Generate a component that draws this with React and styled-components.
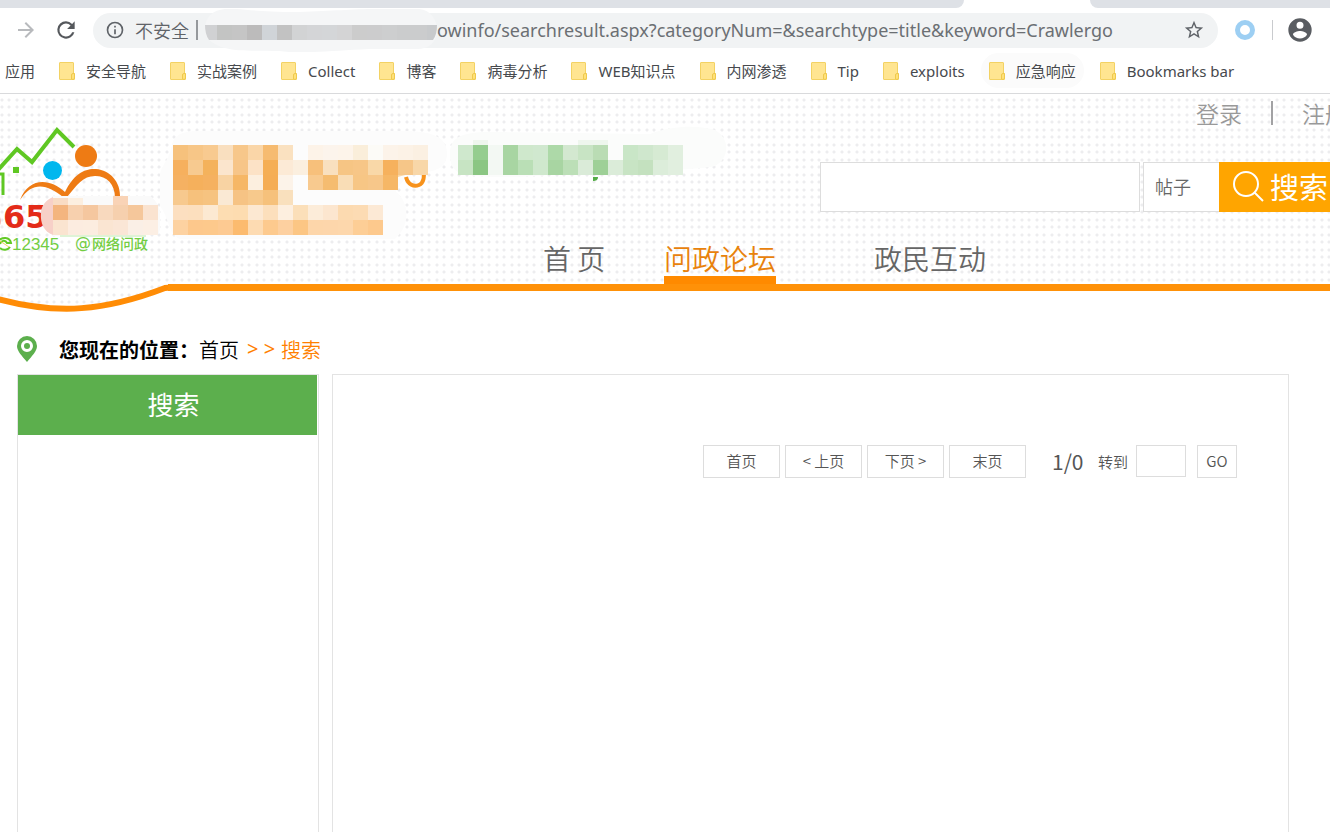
import React from "react";
import styled, { createGlobalStyle, css } from "styled-components";

const GlobalStyle = createGlobalStyle`
  *, *::before, *::after { box-sizing: border-box; }
  body {
    margin: 0;
    background: #fff;
    color: #666;
    font-family: "Noto Sans", "Noto Sans CJK SC", sans-serif;
    font-size: 15px;
  }
  button, input, select { font: inherit; color: inherit; }
  a { color: inherit; text-decoration: none; }
`;

const cjk = css`
  font-family: "Noto Sans CJK SC", sans-serif;
  font-weight: 350;
`;

const Page = styled.div`
  display: flex;
  flex-direction: column;
  min-height: 100vh;
  overflow: hidden;
`;

/* ---------- browser chrome ---------- */

const TabStrip = styled.div`
  display: flex;
  height: 8px;
`;
const TabGroup = styled.div`
  background: #dee1e6;
  flex: ${(p) => p.$grow};
  border-radius: ${(p) => (p.$side === "left" ? "0 0 8px 0" : "0 0 0 8px")};
`;
const ActiveTab = styled.div`
  width: 126px;
`;

const Toolbar = styled.div`
  display: flex;
  align-items: center;
  height: 44px;
  padding: 0 16px 0 14px;
`;
const IconButton = styled.button`
  display: flex;
  align-items: center;
  justify-content: center;
  flex: none;
  width: ${(p) => p.$w}px;
  height: 28px;
  padding: 0;
  border: 0;
  background: none;
`;
const Omnibox = styled.div`
  display: flex;
  align-items: center;
  flex: 1;
  height: 35px;
  margin-right: 12px;
  padding: 0 12px;
  border-radius: 18px;
  background: #f1f3f4;
  color: #5f6368;
`;
const Insecure = styled.span`
  ${cjk}
  font-size: 18px;
  line-height: 24px;
  margin-left: 10px;
  padding-right: 7px;
`;
const OmniDivider = styled.span`
  width: 2px;
  height: 20px;
  background: #96999c;
  margin-right: 7px;
`;
const UrlInput = styled.input`
  flex: 1;
  min-width: 0;
  padding: 0;
  border: 0;
  outline: 0;
  background: none;
  color: #6b6f73;
  font-family: "Noto Sans", sans-serif;
  font-size: 18px;
  line-height: 24px;
`;
const BarDivider = styled.span`
  width: 1px;
  height: 20px;
  background: #c9cbce;
  margin: 0 13px 0 12px;
`;

const Bookmarks = styled.nav`
  display: flex;
  align-items: center;
  height: 42px;
  padding: 0 0 4px 5px;
  border-bottom: 1px solid #d9dadc;
  white-space: nowrap;
`;
const Bookmark = styled.a`
  display: flex;
  align-items: center;
  gap: 11px;
  height: 35px;
  padding: 0 8px;
  margin-right: 8px;
  border-radius: 18px;
  background: ${(p) => (p.$hot ? "#fbfbfb" : "none")};
  color: #46494d;
  font-family: "Noto Sans", "Noto Sans CJK SC", sans-serif;
  font-size: 15px;
`;
const Apps = styled(Bookmark)`
  padding-left: 0;
`;

/* ---------- site header ---------- */

const Header = styled.header`
  background-color: #fff;
  background-image:
    radial-gradient(circle at 9px 6px, #ededef 1px, transparent 2px),
    radial-gradient(circle at 2px 6px, #ededef 1px, transparent 2px),
    radial-gradient(circle at 9px 13px, #ededef 1px, transparent 2px),
    radial-gradient(circle at 2px 13px, #ededef 1px, transparent 2px);
  background-size: 15px 15px;
`;
const HeaderBody = styled.div`
  display: flex;
  height: 190px;
`;
const LogoArt = styled.svg`
  flex: none;
  display: block;
`;
const HeaderMain = styled.div`
  flex: 1;
  min-width: 0;
  display: flex;
  flex-direction: column;
  justify-content: space-between;
`;
const HeaderTop = styled.div`
  display: flex;
  justify-content: space-between;
`;
const Tools = styled.div`
  display: flex;
  flex-direction: column;
  align-items: flex-end;
  gap: 30px;
  margin-right: -30px;
`;
const Account = styled.div`
  ${cjk}
  display: flex;
  align-items: center;
  gap: 29px;
  height: 38px;
  padding-right: 12px;
  font-size: 23px;
  color: #999;
`;
const AccountBar = styled.span`
  width: 2px;
  height: 24px;
  background: #a2a2a4;
`;
const SearchForm = styled.form`
  display: flex;
  height: 50px;
`;
const SearchInput = styled.input`
  width: 320px;
  margin-right: 3px;
  padding: 0 10px;
  border: 1px solid #ddd;
  background: #fff;
`;
const SearchKind = styled.select`
  ${cjk}
  appearance: none;
  width: 76px;
  padding: 0 11px 2px;
  border: 1px solid #ddd;
  border-right: 0;
  border-radius: 0;
  background: #fff;
  font-size: 18px;
`;
const SearchButton = styled.button`
  display: flex;
  align-items: center;
  gap: 4px;
  width: 141px;
  padding: 0 0 2px 13px;
  border: 0;
  background: #ffa500;
  color: #fff;
  font-family: "Noto Sans CJK SC", sans-serif;
  font-size: 29px;
`;
const MainNav = styled.nav`
  display: grid;
  grid-template-columns: 121px 210px auto;
  justify-content: start;
  padding-left: 383px;
`;
const NavLink = styled.a`
  ${cjk}
  justify-self: start;
  height: 45px;
  line-height: 38px;
  font-size: 28px;
  color: ${(p) => (p.$active ? "#e8820c" : "#666")};
  border-bottom: 8px solid ${(p) => (p.$active ? "#ff8a00" : "transparent")};
`;
const HeaderRule = styled.div`
  display: flex;
  height: 30px;
`;
const RuleLine = styled.div`
  flex: 1;
  background: #fff;
  border-top: 7px solid #ff9108;
`;

/* ---------- content ---------- */

const Crumbs = styled.div`
  ${cjk}
  display: flex;
  align-items: center;
  height: 50px;
  margin-top: 10px;
  padding-left: 17px;
  font-size: 20px;
  color: #000;
`;
const CrumbLabel = styled.strong`
  margin-left: 22px;
  font-weight: 700;
`;
const CrumbTrail = styled.span`
  display: flex;
  gap: 6px;
  margin-left: 8px;
  color: #ff7f00;
`;
const Chevrons = styled.span`
  font-family: "Noto Sans", sans-serif;
  font-weight: 400;
`;
const Columns = styled.main`
  display: flex;
  flex: 1;
  gap: 13px;
  padding: 0 41px 0 17px;
`;
const Sidebar = styled.aside`
  width: 302px;
  flex: none;
  border: 1px solid #e3e3e3;
  border-bottom: 0;
  padding-right: 1px;
`;
const SidebarTitle = styled.h2`
  margin: 0;
  height: 60px;
  padding-left: 12px;
  line-height: 58px;
  background: #5caf4d;
  color: #fff;
  font-family: "Noto Sans CJK SC", sans-serif;
  font-size: 26px;
  font-weight: 400;
  text-align: center;
`;
const Results = styled.section`
  flex: 1;
  border: 1px solid #e3e3e3;
  border-bottom: 0;
  padding: 70px 51px 0 0;
`;
const Pager = styled.form`
  ${cjk}
  display: flex;
  align-items: center;
  justify-content: flex-end;
  gap: 5px;
  color: #555;
`;
const PageButton = styled.button`
  width: ${(p) => (p.$small ? 40 : 77)}px;
  height: 33px;
  padding: 0 0 2px;
  border: 1px solid #ddd;
  background: #fff;
  font-size: 15px;
`;
const PageCount = styled.span`
  width: 46px;
  margin-left: 21px;
  font-family: "Noto Sans CJK SC", sans-serif;
  font-size: 21px;
  font-weight: 400;
  line-height: 31px;
  white-space: nowrap;
`;
const PageLabel = styled.label`
  display: flex;
  align-items: center;
  gap: 8px;
  height: 33px;
  padding-bottom: 1px;
  margin-right: 6px;
  margin-left: -5px;
  font-size: 15px;
`;
const PageInput = styled.input`
  width: 50px;
  height: 32px;
  padding: 0 4px;
  border: 1px solid #ddd;
`;

/* ---------- drawings ---------- */

const CELL = 15;

function Mosaic({ x, y, rows }) {
  return rows.map((row, r) =>
    row.split(" ").map((c, i) =>
      c === "-" ? null : (
        <rect key={`${r}-${i}`} x={x + i * CELL} y={y + r * CELL} width={CELL} height={CELL} fill={`#${c}`} shapeRendering="crispEdges" />
      )
    )
  );
}

const TITLE_ROWS = [
  "f6c17c f7c687 f8ca90 f9dfbf f7c78a fad6a8 f6bb70 fae1c0 - fdf3e8 fcf4ec fdf4ea faeeda fcfbf7 fcf3e9 fcf2e6 fbf0e2",
  "f6b05e f7ca90 f4b25c fbe5cd f7c588 fce2c6 f5ae55 fcead6 fbefdf f7c07b f9e0bf f6c584 f7c687 f9d8a8 f6b15d f6c688 f8d7a8",
  "f5b162 f5b05c f5b160 f8d3a3 f6b766 fcefdf f5ad55 fcf3e9 - f8ca8f f5bc70 f9ddb6 f7c685 f7c78a f6b766",
  "f7c98e f6c17c f6c380 fae9d4 f6c384 f7c98c f6c17b f9e0bd",
  "fcdfc0 fcdfbe fce9d2 fdddb2 fddcb0 fce8d2 fcdfbc fdefdf fbdfb9 fcecd9 fce6cf fcdab0 fcdbb3 fce9d5",
  "fdd2a1 fdc88c fdc98c fdca92 fcbb6f fddbb2 fdca8e fdd0a0 fcc684 fdd6aa fdd6ab fdd7ac fdce96 fdc98d",
];
const SLOGAN_ROWS = [
  "cfe8cd 95cd8f f3f8f3 a8d5a2 cfe8cc d0e8cf add9a8 d3e8d0 c8e4c4 badcb4 - c9e6c7 cfe7cd d6ead3 e1efdf",
  "c7e4c3 8bc683 f3f8f3 a8d5a2 badfb6 cfe8cd a8d5a2 bcdfb7 daebd8 9ed097 dbecd9 c8e4c4 c4e1bf dcedda e1efdf",
];
const LOGO_ROWS = [
  "f4b57f f7d0ae f5c79f f8d9be f6d0ae f5c79b fae3d0",
  "fae4d0 fcece0 fcede0 fae5d2 fae6d6 faefe6 fcefe4",
];
const HOST_ROW = ["c3c4c3 c5c5c5 bcbbbb d0d4d8 c2c2c2 d2d3d4 d4d5d7 d4d6d8 d4d4d5 cccccc cccccd cdcecf cbcccd cbcccd"];

function Logo() {
  return (
    <LogoArt width="160" height="190" viewBox="0 0 160 190" role="img" aria-label="网络问政 12345">
      <g fill="none" stroke="#5fc723" strokeWidth="4">
        <path d="M-2 76 17 55 32 68 57 36 74 53" />
        <path d="M-2 80H3V101" strokeWidth="3" />
      </g>
      <rect x="13" y="73" width="6" height="6" fill="#5fc723" />
      <circle cx="52.5" cy="76.500" r="9.500" fill="#00b7ee" />
      <circle cx="86" cy="62" r="11" fill="#ee7b14" />
      <path d="M20 106C28 84 49 83 65 98C74 79 86 74 96 75C110 76 121 88 120 104H115C115 90 107 82 95 82C83 82 77 91 67 103H63C48 91 33 86 20 106Z" fill="#ee7b14" />
      <path d="M0 123C1 126 1 129 0 131Z" fill="#f0a49b" />
      <text x="3" y="134" fontFamily="DejaVu Sans" fontWeight="700" fontSize="32" fill="#e32b19">65</text>
      <path d="M53 141C44 138 40 129 41 119C41 112 46 106 53 103Z" fill="#f7d0c8" />
      <path d="M53 102H150C162 110 164 130 158 140L53 142Z" fill="#fafafa" />
      <path d="M53 104H68V112H53Z" fill="#f9dcc4" />
      <path d="M68 104H83V112H68Z" fill="#fcefe0" />
      <path d="M113 102H128V112H113Z" fill="#f9d3b6" />
      <path d="M60 141H146V143H60Z" fill="#dff3d6" />
      <Mosaic x={53} y={111} rows={LOGO_ROWS} />
      <path d="M-3 148C2 142 10 143 11 149L7 149C5 145 1 147 0 150M0 154C3 157 8 156 10 153" fill="none" stroke="#62c926" strokeWidth="2" />
      <path d="M0 147 9 153" stroke="#f3d35a" />
      <g fill="#72cd42">
        <text x="12" y="156" fontFamily="Liberation Sans" fontSize="17">12345</text>
        <text x="75" y="154" fontFamily="DejaVu Sans" fontSize="16">@</text>
        <text x="92" y="155" fontFamily="Noto Sans CJK SC" fontWeight="500" fontSize="14">网络问政</text>
      </g>
    </LogoArt>
  );
}

function Banner() {
  return (
    <LogoArt width="580" height="145" viewBox="160 0 580 145" aria-hidden="true">
      <path d="M172 50C176 38 186 37 205 37H400C436 37 447 44 447 60C447 72 438 77 425 78C408 80 402 86 396 98C408 106 412 130 395 145H180C168 140 170 126 160 112V82C160 72 170 66 172 50Z" fill="#fcfcfc" />
      <path d="M450 60C450 44 460 38 490 38L650 40C672 31 700 31 715 36C730 44 730 64 715 72C690 78 600 76 560 80C520 84 480 84 462 80C452 76 450 70 450 60Z" fill="#fbfcfb" />
      <path d="M406 83C408 91 414 93 419 91C424 89 424 83 424 77" fill="none" stroke="#f7921c" strokeWidth="4" />
      <path d="M411 66H428V76C420 79 407 80 398 83V66Z" fill="#fad6a5" />
      <Mosaic x={173} y={51} rows={TITLE_ROWS} />
      <path d="M473 46H488V51H473ZM578 46H608V51H578Z" fill="#eef6ed" />
      <Mosaic x={458} y={51} rows={SLOGAN_ROWS} />
      <path d="M593 83H598C598 86 596 87 593 87Z" fill="#55ad48" />
    </LogoArt>
  );
}

function HostBlur() {
  return (
    <LogoArt width="232" height="43" viewBox="206 9 232 43" aria-hidden="true">
      <path d="M206 29C206 17 214 10 226 9C244 8 250 12 300 12C335 11 350 9 380 9H420C432 10 438 20 438 30C438 42 430 49 418 49L370 49C330 51 300 54 280 51C255 50 240 52 226 48C212 44 206 38 206 29Z" fill="#f5f6f7" />
      <path d="M206 25H218V40H210C207 36 206 30 206 25Z" fill="#d0d1d3" />
      <path d="M428 25H438C438 31 437 36 434 40H428Z" fill="#c8cacc" />
      <Mosaic x={218} y={25} rows={HOST_ROW} />
    </LogoArt>
  );
}

function Glyph({ size, d, color }) {
  return (
    <svg width={size} height={size} viewBox="0 0 24 24" fill={color} aria-hidden="true">
      <path d={d} />
    </svg>
  );
}
const FORWARD = "M12 4l-1.410 1.410L16.170 11H4v2h12.170l-5.580 5.590L12 20l8-8z";
const RELOAD =
  "M17.650 6.350A7.960 7.960 0 0 0 12 4a8 8 0 1 0 7.730 10h-2.080A6 6 0 1 1 12 6c1.660 0 3.140.690 4.220 1.780L13 11h7V4z";
const INFO =
  "M11 7h2v2h-2zm0 4h2v6h-2zm1-9a10 10 0 1 0 0 20 10 10 0 0 0 0-20zm0 18a8 8 0 1 1 0-16 8 8 0 0 1 0 16z";
const STAR =
  "M22 9.240l-7.190-.62L12 2 9.190 8.630 2 9.240l5.460 4.730L5.820 21 12 17.270 18.180 21l-1.630-7.030zM12 15.400l-3.760 2.270 1-4.280-3.320-2.880 4.380-.380L12 6.100l1.710 4.040 4.380.380-3.320 2.880 1 4.280z";
const PERSON =
  "M12 2a10 10 0 1 0 0 20 10 10 0 0 0 0-20zm0 3a3 3 0 1 1 0 6 3 3 0 0 1 0-6zm0 14.200a7.200 7.200 0 0 1-6-3.220c.030-1.990 4-3.080 6-3.080s5.970 1.090 6 3.080a7.200 7.200 0 0 1-6 3.220z";

function Folder() {
  return (
    <svg width="16" height="18" viewBox="0 0 16 18" aria-hidden="true">
      <path d="M1 .5H14Q14.500.5 14.500 1V12H15.500V17Q15.500 17.500 15 17.500H1Q.5 17.500.5 17V1Q.5.5 1 .5Z" fill="#ffe591" stroke="#f3d264" />
      <path d="M12.500 17V13Q12.500 11.500 14 11.500H15.500V16Q15.500 17.500 14 17.500Z" fill="#ffe17a" stroke="#efc94d" />
    </svg>
  );
}

function Wave() {
  return (
    <LogoArt width="168" height="30" viewBox="0 0 168 30" aria-hidden="true">
      <path d="M0 16C58 32 105 27 168 3V30H0Z" fill="#fff" />
      <path d="M-2 15C58 31 105 27 165 4L170 3.500" fill="none" stroke="#ff8c05" strokeWidth="6" />
    </LogoArt>
  );
}

function Pin() {
  return (
    <svg width="20" height="26" viewBox="0 0 20 26" aria-hidden="true">
      <path fillRule="evenodd" d="M10 0A10 10 0 0 0 0 10C0 15 5 20 10 26C15 20 20 15 20 10A10 10 0 0 0 10 0ZM10 4A6 6 0 1 1 10 16A6 6 0 1 1 10 4Z" fill="#5caf4d" />
      <circle cx="10" cy="10" r="3" fill="#5caf4d" />
    </svg>
  );
}

const BOOKMARKS = [
  { name: "安全导航" },
  { name: "实战案例" },
  { name: "Collect" },
  { name: "博客" },
  { name: "病毒分析" },
  { name: "WEB知识点" },
  { name: "内网渗透" },
  { name: "Tip" },
  { name: "exploits" },
  { name: "应急响应", hot: true },
  { name: "Bookmarks bar" },
];

export default function App() {
  const stop = (e) => e.preventDefault();
  return (
    <Page>
      <GlobalStyle />
      <TabStrip>
        <TabGroup $grow={964} $side="left" />
        <ActiveTab />
        <TabGroup $grow={240} $side="right" />
      </TabStrip>
      <Toolbar>
        <IconButton $w={24} aria-label="前进">
          <Glyph size={24} d={FORWARD} color="#b8babd" />
        </IconButton>
        <IconButton $w={55} aria-label="刷新">
          <Glyph size={26} d={RELOAD} color="#55585c" />
        </IconButton>
        <Omnibox>
          <Glyph size={20} d={INFO} color="#5f6368" />
          <Insecure>不安全</Insecure>
          <OmniDivider />
          <HostBlur />
          <UrlInput aria-label="地址" defaultValue="owinfo/searchresult.aspx?categoryNum=&searchtype=title&keyword=Crawlergo" />
          <IconButton $w={24} aria-label="收藏">
            <Glyph size={22} d={STAR} color="#5f6368" />
          </IconButton>
        </Omnibox>
        <IconButton $w={30} aria-label="扩展">
          <svg width="22" height="22" viewBox="0 0 22 22" aria-hidden="true">
            <circle cx="11" cy="11" r="7.500" fill="#fff" stroke="#9dcff3" strokeWidth="5" />
          </svg>
        </IconButton>
        <BarDivider />
        <IconButton $w={28} aria-label="用户">
          <Glyph size={28} d={PERSON} color="#5a5d62" />
        </IconButton>
      </Toolbar>
      <Bookmarks aria-label="书签">
        <Apps href="#apps">应用</Apps>
        {BOOKMARKS.map((b) => (
          <Bookmark key={b.name} href="#bookmark" $hot={b.hot}>
            <Folder />
            {b.name}
          </Bookmark>
        ))}
      </Bookmarks>

      <Header>
        <HeaderBody>
          <Logo />
          <HeaderMain>
            <HeaderTop>
              <Banner />
              <Tools>
                <Account>
                  <a href="#login">登录</a>
                  <AccountBar />
                  <a href="#register">注册</a>
                </Account>
                <SearchForm onSubmit={stop}>
                  <SearchInput aria-label="关键字" />
                  <SearchKind aria-label="类型" defaultValue="帖子">
                    <option>帖子</option>
                  </SearchKind>
                  <SearchButton>
                    <svg width="34" height="34" viewBox="0 0 34 34" fill="none" stroke="#fff" strokeWidth="2" aria-hidden="true">
                      <circle cx="14" cy="15" r="12" />
                      <path d="M22.500 23.500 31 32" />
                    </svg>
                    搜索
                  </SearchButton>
                </SearchForm>
              </Tools>
            </HeaderTop>
            <MainNav aria-label="主导航">
              <NavLink href="#home">首 页</NavLink>
              <NavLink href="#forum" $active>问政论坛</NavLink>
              <NavLink href="#interact">政民互动</NavLink>
            </MainNav>
          </HeaderMain>
        </HeaderBody>
        <HeaderRule>
          <Wave />
          <RuleLine />
        </HeaderRule>
      </Header>

      <Crumbs>
        <Pin />
        <CrumbLabel>您现在的位置：</CrumbLabel>
        <a href="#home">首页</a>
        <CrumbTrail>
          <Chevrons>&gt; &gt;</Chevrons>
          <a href="#search">搜索</a>
        </CrumbTrail>
      </Crumbs>
      <Columns>
        <Sidebar>
          <SidebarTitle>搜索</SidebarTitle>
        </Sidebar>
        <Results>
          <Pager onSubmit={stop}>
            <PageButton type="button">首页</PageButton>
            <PageButton type="button">&lt; 上页</PageButton>
            <PageButton type="button">下页 &gt;</PageButton>
            <PageButton type="button">末页</PageButton>
            <PageCount>1/0</PageCount>
            <PageLabel>
              转到
              <PageInput />
            </PageLabel>
            <PageButton $small>GO</PageButton>
          </Pager>
        </Results>
      </Columns>
    </Page>
  );
}
